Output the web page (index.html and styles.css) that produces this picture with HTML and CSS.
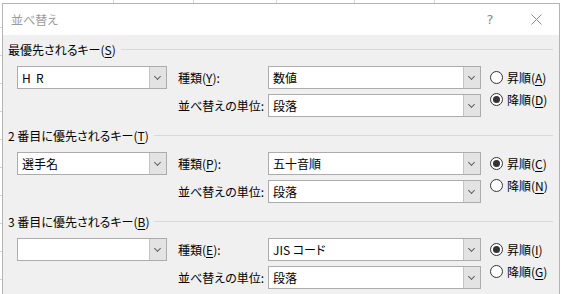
FILE: index.html
```html
<!DOCTYPE html>
<html lang="ja">
<head>
  <meta charset="UTF-8" />
  <title>並べ替え</title>
  <link rel="stylesheet" href="styles.css">
</head>
<body>

<!-- Sort dialog sitting over the document -->
<div class="dialog">
  <div class="titlebar">
    <span class="title">並べ替え</span>
    <span class="cap-btn help">?</span>
    <span class="cap-btn close">
      <svg width="11" height="11" viewBox="0 0 11 11"><path d="M0.5 0.5 L10.5 10.5 M10.5 0.5 L0.5 10.5" stroke="#8a8a8a" stroke-width="1" fill="none"/></svg>
    </span>
  </div>

  <div class="dialog-body">

    <section class="key-group">
      <div class="group-head"><span>最優先されるキー(<u>S</u>)</span><i class="rule"></i></div>
      <div class="group-grid">
        <div class="combo key"><span class="val">H&nbsp; R</span><span class="drop"></span></div>
        <div class="lbl"><span>種類(<u>Y</u>):</span></div>
        <div class="combo"><span class="val">数値</span><span class="drop"></span></div>
        <div class="radios">
          <div class="radio"><span class="dot"></span><span>昇順(<u>A</u>)</span></div>
          <div class="radio"><span class="dot on"></span><span>降順(<u>D</u>)</span></div>
        </div>
        <div class="lbl row2">並べ替えの単位:</div>
        <div class="combo row2c"><span class="val">段落</span><span class="drop"></span></div>
      </div>
    </section>

    <section class="key-group">
      <div class="group-head"><span>2 番目に優先されるキー(<u>T</u>)</span><i class="rule"></i></div>
      <div class="group-grid">
        <div class="combo key"><span class="val">選手名</span><span class="drop"></span></div>
        <div class="lbl"><span>種類(<u>P</u>):</span></div>
        <div class="combo"><span class="val">五十音順</span><span class="drop"></span></div>
        <div class="radios">
          <div class="radio"><span class="dot on"></span><span>昇順(<u>C</u>)</span></div>
          <div class="radio"><span class="dot"></span><span>降順(<u>N</u>)</span></div>
        </div>
        <div class="lbl row2">並べ替えの単位:</div>
        <div class="combo row2c"><span class="val">段落</span><span class="drop"></span></div>
      </div>
    </section>

    <section class="key-group">
      <div class="group-head"><span>3 番目に優先されるキー(<u>B</u>)</span><i class="rule"></i></div>
      <div class="group-grid">
        <div class="combo key"><span class="val"></span><span class="drop"></span></div>
        <div class="lbl"><span>種類(<u>E</u>):</span></div>
        <div class="combo"><span class="val">JIS コード</span><span class="drop"></span></div>
        <div class="radios">
          <div class="radio"><span class="dot on"></span><span>昇順(<u>I</u>)</span></div>
          <div class="radio"><span class="dot"></span><span>降順(<u>G</u>)</span></div>
        </div>
        <div class="lbl row2">並べ替えの単位:</div>
        <div class="combo row2c"><span class="val">段落</span><span class="drop"></span></div>
      </div>
    </section>

  </div>
</div>

</body>
</html>
```

FILE: styles.css
```css
body {
  margin: 0;
  width: 562px;
  height: 294px;
  overflow: hidden;
  position: relative;
  font-family: "Noto Sans CJK JP", "Noto Sans", sans-serif;
  font-size: 12px;
  font-feature-settings: "palt";
  color: #000;
  background:
    linear-gradient(#d6d6d6, #d6d6d6) 113px 0 / 1px 4px no-repeat,
    linear-gradient(#d6d6d6, #d6d6d6) 193px 0 / 1px 4px no-repeat,
    linear-gradient(#d6d6d6, #d6d6d6) 276px 0 / 1px 4px no-repeat,
    linear-gradient(#d6d6d6, #d6d6d6) 354px 0 / 1px 4px no-repeat,
    linear-gradient(#d6d6d6, #d6d6d6) 434px 0 / 1px 4px no-repeat,
    repeating-linear-gradient(to bottom, transparent 0 27px, #d6d6d6 27px 28px) 0 0 / 2px 100% no-repeat,
    #fff;
}

u {
  text-decoration: underline;
  text-underline-offset: 2px;
}

/* dialog window */
.dialog {
  position: absolute;
  left: 2px;
  top: 3px;
  width: 558px;
  height: 300px;
  box-sizing: border-box;
  border: 1px solid #b4b4b4;
  background: #f0f0f0;
}

.titlebar {
  height: 31px;
  background: #fff;
  display: flex;
  align-items: center;
  padding-left: 8px;
}

.title {
  flex: 1;
  color: #9a9a9a;
}

.cap-btn {
  width: 46px;
  height: 31px;
  display: flex;
  align-items: center;
  justify-content: center;
  color: #8a8a8a;
}

.help {
  font-family: "DejaVu Sans", sans-serif;
  font-size: 13px;
}

.dialog-body {
  padding: 6px 6px 0 5px;
}

/* one sort key */
.key-group {
  margin-bottom: 10px;
}

.group-head {
  display: flex;
  align-items: center;
  height: 16px;
  gap: 5px;
  white-space: nowrap;
}

.group-head .rule {
  flex: 1;
  height: 0;
  border-top: 1px solid #d9d9d9;
}

.group-grid {
  display: grid;
  grid-template-columns: 150px 101px 213px 1fr;
  grid-template-rows: 23px 23px;
  row-gap: 5px;
  margin: 9px 0 0 9px;
}

.lbl {
  padding-left: 11px;
  display: flex;
  align-items: center;
  white-space: nowrap;
}

.row2 {
  grid-column: 2;
  grid-row: 2;
}

.row2c {
  grid-column: 3;
  grid-row: 2;
}

/* combo box */
.combo {
  display: flex;
  box-sizing: border-box;
  border: 1px solid #acacac;
  background: #fff;
}

.combo .val {
  flex: 1;
  padding-left: 4px;
  display: flex;
  align-items: center;
  white-space: nowrap;
}

.combo .drop {
  width: 16px;
  background: #e3e3e3;
  border-left: 1px solid #c4c4c4;
  position: relative;
}

.combo .drop::after {
  content: "";
  position: absolute;
  left: 5px;
  top: 7px;
  width: 4px;
  height: 4px;
  border-right: 1px solid #606060;
  border-bottom: 1px solid #606060;
  transform: rotate(45deg);
}

/* radio buttons */
.radios {
  grid-column: 4;
  grid-row: 1 / span 2;
  display: flex;
  flex-direction: column;
  gap: 6px;
  padding: 3px 0 0 9px;
}

.radio {
  display: flex;
  align-items: center;
  gap: 4px;
  height: 16px;
  white-space: nowrap;
}

.dot {
  width: 13px;
  height: 13px;
  flex: none;
  box-sizing: border-box;
  border: 1px solid #333;
  border-radius: 50%;
  background: #fff;
  position: relative;
}

.dot.on::after {
  content: "";
  position: absolute;
  left: 2px;
  top: 2px;
  width: 7px;
  height: 7px;
  border-radius: 50%;
  background: #333;
}
```
